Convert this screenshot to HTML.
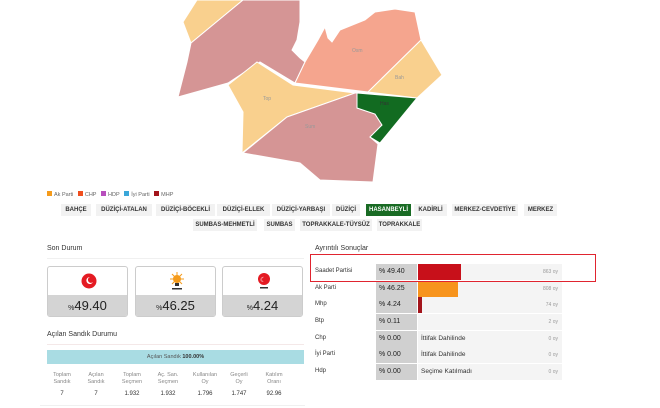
<!DOCTYPE html>
<html><head><meta charset="utf-8"><style>
*{margin:0;padding:0;box-sizing:border-box}
body{width:660px;height:408px;background:#fff;font-family:"Liberation Sans",sans-serif;position:relative;overflow:hidden;color:#333}
.a{position:absolute}
.tab{position:absolute;height:12px;background:#f2f2f2;font-size:6px;font-weight:bold;line-height:12px;text-align:center;color:#333}
.card{position:absolute;top:266px;width:81px;height:51px;border:1px solid #ccc;border-radius:3px;background:#fff;overflow:hidden}
.card .b{position:absolute;left:0;right:0;top:28px;bottom:0;background:#d4d4d4;text-align:center;font-size:13px;line-height:22px;color:#222}
.card .b small{font-size:7px}
.lbl{position:absolute;font-size:6px;color:#333}
.st{position:absolute;font-size:5.5px;color:#888;text-align:center;width:36px;line-height:7px}
.sv{position:absolute;font-size:6px;color:#333;text-align:center;width:36px}
.row{position:absolute;left:315px;width:247px;height:16px}
.row .n{position:absolute;left:0;top:4px;font-size:6px}
.row .p{position:absolute;left:61px;width:41px;height:16px;background:#d0d0d0;font-size:7px;line-height:16px;padding-left:3px;color:#222}
.row .g{position:absolute;left:103px;width:144px;height:16px;background:#f4f4f4}
.row .v{position:absolute;right:4px;top:5px;font-size:5px;color:#999}
.row .t{position:absolute;left:3px;top:4px;font-size:6.5px;color:#333}
</style></head><body>
<svg class="a" style="left:0;top:0" width="660" height="190">
<g stroke="#fff" stroke-width="1">
<polygon points="183,22 197,0 243,0 191,43" fill="#f9d08e"/>
<polygon points="191,43 243,0 300,0 300,22 297,40 292,50 300,58 305,62 295,83 260,62 228,83 178,97 187,62" fill="#d59595"/>
<polygon points="295,83 305,62 318,40 325,27 328,38 332,42 340,30 365,20 375,12 395,9 415,12 421,40 368,92" fill="#f5a58e"/>
<polygon points="421,40 442,75 417,98 368,92" fill="#f9d08e"/>
<polygon points="228,85 257,62 293,85 355,93 287,117 242,153 243,112" fill="#f9d08e"/>
<polygon points="287,117 355,93 357,93 357,108 375,114 382,125 370,137 378,144 373,182 320,180 300,163 243,153" fill="#d59595"/>
<polygon points="357,93 417,98 380,143 370,137 382,125 375,114 357,108" fill="#126b21"/>
</g>
<g font-size="5" fill="#999"><text x="352" y="52">Osm</text><text x="395" y="79">Bah</text><text x="263" y="100">Top</text><text x="305" y="128">Sum</text><text x="380" y="105" fill="#333">Has</text></g>
</svg>
<div class="a" style="left:47px;top:191px;font-size:5.5px;color:#666;white-space:nowrap">
<span style="display:inline-block;width:5px;height:5px;background:#f59b1b;margin-right:2px"></span>Ak Parti&nbsp;&nbsp;
<span style="display:inline-block;width:5px;height:5px;background:#f04e1e;margin-right:2px"></span>CHP&nbsp;&nbsp;
<span style="display:inline-block;width:5px;height:5px;background:#b84fbd;margin-right:2px"></span>HDP&nbsp;&nbsp;
<span style="display:inline-block;width:5px;height:5px;background:#3aa7d9;margin-right:2px"></span>İyi Parti&nbsp;&nbsp;
<span style="display:inline-block;width:5px;height:5px;background:#a3141b;margin-right:2px"></span>MHP</div>
<div class="tab" style="left:61px;top:204px;width:30px">BAHÇE</div>
<div class="tab" style="left:96px;top:204px;width:56px">DÜZİÇİ-ATALAN</div>
<div class="tab" style="left:156px;top:204px;width:59px">DÜZİÇİ-BÖCEKLİ</div>
<div class="tab" style="left:217px;top:204px;width:53px">DÜZİÇİ-ELLEK</div>
<div class="tab" style="left:272px;top:204px;width:58px">DÜZİÇİ-YARBAŞI</div>
<div class="tab" style="left:332px;top:204px;width:28px">DÜZİÇİ</div>
<div class="tab" style="left:366px;top:204px;width:45px;background:#196b24;color:#fff">HASANBEYLİ</div>
<div class="tab" style="left:414px;top:204px;width:33px">KADİRLİ</div>
<div class="tab" style="left:452px;top:204px;width:66px">MERKEZ-CEVDETİYE</div>
<div class="tab" style="left:524px;top:204px;width:33px">MERKEZ</div>
<div class="tab" style="left:193px;top:219px;width:64px">SUMBAS-MEHMETLİ</div>
<div class="tab" style="left:264px;top:219px;width:31px">SUMBAS</div>
<div class="tab" style="left:300px;top:219px;width:72px">TOPRAKKALE-TÜYSÜZ</div>
<div class="tab" style="left:377px;top:219px;width:45px">TOPRAKKALE</div>
<div class="a" style="left:40px;top:240px;width:265px;height:166px;border-bottom:1px solid #f0f0f0"></div>
<div class="a" style="left:47px;top:245px;font-size:7px">Son Durum</div>
<div class="a" style="left:47px;top:258px;width:257px;height:1px;background:#f0f0f0"></div>
<div class="card" style="left:47px"><svg class="a" style="left:33px;top:6px" width="16" height="16"><circle cx="8" cy="8" r="7.5" fill="#e41b23"/><path d="M9 4a3.5 3.5 0 1 0 3 5 3 3 0 1 1-3-5z" fill="#fff"/></svg><div class="b"><small>%</small>49.40</div></div>
<div class="card" style="left:135px"><svg class="a" style="left:33px;top:4px" width="16" height="20"><circle cx="8" cy="8" r="4" fill="#f59b1b"/><g stroke="#f59b1b" stroke-width="1"><path d="M8 1v14M1 8h14M3 3l10 10M13 3L3 13"/></g><rect x="6" y="12" width="4" height="3" fill="#333"/><rect x="3" y="17" width="10" height="1.5" fill="#333"/></svg><div class="b"><small>%</small>46.25</div></div>
<div class="card" style="left:222px"><svg class="a" style="left:33px;top:5px" width="16" height="18"><circle cx="8" cy="7" r="6" fill="#e41b23"/><text x="4" y="10" font-size="7" fill="#fff">☾</text><rect x="4" y="15" width="8" height="1.5" fill="#333"/></svg><div class="b"><small>%</small>4.24</div></div>
<div class="a" style="left:47px;top:331px;font-size:7px">Açılan Sandık Durumu</div>
<div class="a" style="left:47px;top:344px;width:257px;height:1px;background:#f4e8e8"></div>
<div class="a" style="left:47px;top:350px;width:257px;height:14px;background:#a9dce3;font-size:5.5px;text-align:center;line-height:14px;color:#555">Açılan Sandık <b style="color:#333">100.00%</b></div>
<div class="st" style="left:44px;top:372px">Toplam<br>Sandık</div><div class="sv" style="left:44px;top:391px">7</div>
<div class="st" style="left:78px;top:372px">Açılan<br>Sandık</div><div class="sv" style="left:78px;top:391px">7</div>
<div class="st" style="left:114px;top:372px">Toplam<br>Seçmen</div><div class="sv" style="left:114px;top:391px">1.932</div>
<div class="st" style="left:150px;top:372px">Aç. San.<br>Seçmen</div><div class="sv" style="left:150px;top:391px">1.932</div>
<div class="st" style="left:187px;top:372px">Kullanılan<br>Oy</div><div class="sv" style="left:187px;top:391px">1.796</div>
<div class="st" style="left:221px;top:372px">Geçerli<br>Oy</div><div class="sv" style="left:221px;top:391px">1.747</div>
<div class="st" style="left:256px;top:372px">Katılım<br>Oranı</div><div class="sv" style="left:256px;top:391px">92.96</div>
<div class="a" style="left:315px;top:245px;font-size:7px">Ayrıntılı Sonuçlar</div>
<div class="row" style="top:264px"><div class="n">Saadet Partisi</div><div class="p">% 49.40</div><div class="g"><div class="a" style="left:0;top:0;width:43px;height:16px;background:#c8101a"></div><div class="v">863 oy</div></div></div>
<div class="row" style="top:281px"><div class="n">Ak Parti</div><div class="p">% 46.25</div><div class="g"><div class="a" style="left:0;top:0;width:40px;height:16px;background:#f7941d"></div><div class="v">808 oy</div></div></div>
<div class="row" style="top:297px"><div class="n">Mhp</div><div class="p">% 4.24</div><div class="g"><div class="a" style="left:0;top:0;width:4px;height:16px;background:#a3141b"></div><div class="v">74 oy</div></div></div>
<div class="row" style="top:314px"><div class="n">Btp</div><div class="p">% 0.11</div><div class="g"><div class="v">2 oy</div></div></div>
<div class="row" style="top:331px"><div class="n">Chp</div><div class="p">% 0.00</div><div class="g"><div class="t">İttifak Dahilinde</div><div class="v">0 oy</div></div></div>
<div class="row" style="top:347px"><div class="n">İyi Parti</div><div class="p">% 0.00</div><div class="g"><div class="t">İttifak Dahilinde</div><div class="v">0 oy</div></div></div>
<div class="row" style="top:364px"><div class="n">Hdp</div><div class="p">% 0.00</div><div class="g"><div class="t">Seçime Katılmadı</div><div class="v">0 oy</div></div></div>
<div class="a" style="left:310px;top:254px;width:286px;height:28px;border:1.5px solid #e0242f"></div>
</body></html>
